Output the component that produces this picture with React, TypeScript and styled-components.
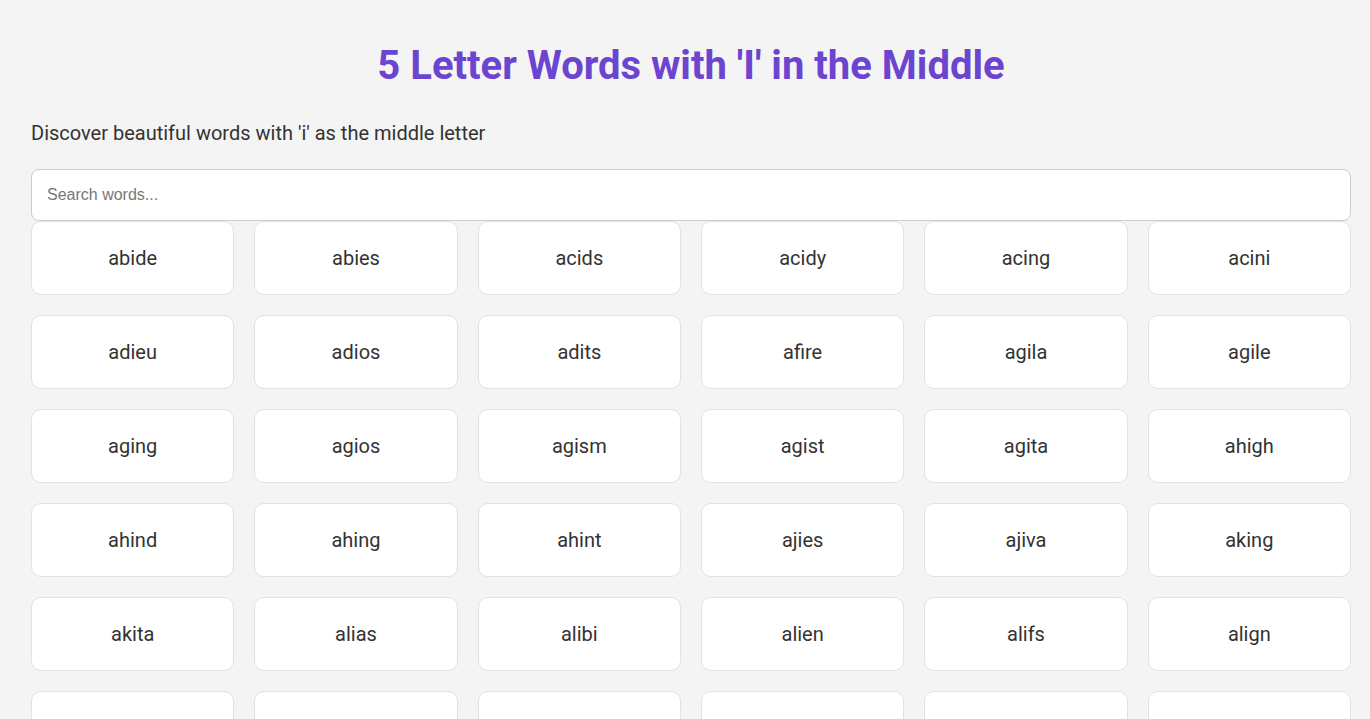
import styled, { createGlobalStyle } from "styled-components";

const GlobalStyle = createGlobalStyle`
  body {
    margin: 0;
    background: #f4f4f4;
    font-family: Roboto, "Liberation Sans", Arial, sans-serif;
  }
`

const Page = styled.main`
  width: 1320px;
  margin: 0 auto;
  padding: 0 19px 40px 31px;
`

const Title = styled.h1`
  margin: 0;
  padding-top: 41px;
  text-align: center;
  font-size: 40px;
  font-weight: 700;
  line-height: 50px;
  color: #6b45cf;
`

const Subtitle = styled.p`
  margin: 28px 0 22px;
  font-size: 20px;
  line-height: 28px;
  color: #333;
`

const SearchInput = styled.input`
  display: block;
  box-sizing: border-box;
  width: 100%;
  height: 52px;
  padding: 0 15px;
  border: 1px solid #cccccc;
  border-radius: 8px;
  background: #fff;
  font-family: "Liberation Sans", Arial, sans-serif;
  font-size: 16px;
  color: #333;
  outline: none;

  &::placeholder {
    color: #777;
  }
`

const Grid = styled.div`
  display: grid;
  grid-template-columns: repeat(6, 1fr);
  gap: 20px;
`

const WordCard = styled.div`
  height: 74px;
  box-sizing: border-box;
  display: flex;
  align-items: center;
  justify-content: center;
  background: #fff;
  border: 1px solid #e2e2e2;
  border-radius: 10px;
  font-size: 20px;
  color: #333;
`

const words = [
  "abide", "abies", "acids", "acidy", "acing", "acini",
  "adieu", "adios", "adits", "afire", "agila", "agile",
  "aging", "agios", "agism", "agist", "agita", "ahigh",
  "ahind", "ahing", "ahint", "ajies", "ajiva", "aking",
  "akita", "alias", "alibi", "alien", "alifs", "align",
  "alike", "aline", "alist", "alive", "alkie", "amice",
]

export default function App() {
  return (
    <>
      <GlobalStyle />
      <Page>
        <Title>5 Letter Words with 'I' in the Middle</Title>
        <Subtitle>Discover beautiful words with 'i' as the middle letter</Subtitle>
        <SearchInput placeholder="Search words..." />
        <Grid>
          {words.map((w) => (
            <WordCard key={w}>{w}</WordCard>
          ))}
        </Grid>
      </Page>
    </>
  )
}
